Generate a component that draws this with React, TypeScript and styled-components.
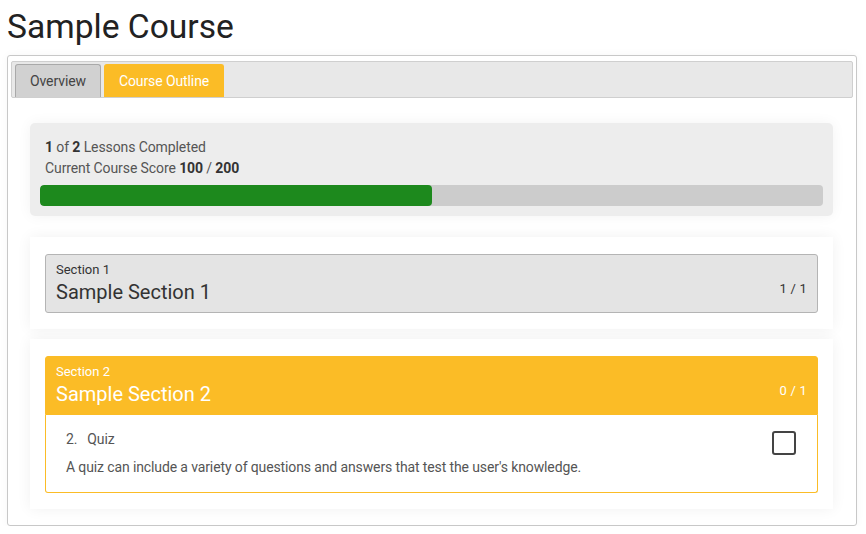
import styled, { createGlobalStyle } from 'styled-components';

const GlobalStyle = createGlobalStyle`
  body {
    margin: 0;
    background: #ffffff;
    font-family: Roboto, "Liberation Sans", Arial, sans-serif;
    color: #444;
  }
`;

const Yellow = '#fbbc26';

const Page = styled.div`
  padding: 8px 9px 0 7px;
`;

const Title = styled.h1`
  margin: 0 0 9px 0;
  font-size: 33.6px;
  line-height: 38px;
  font-weight: 400;
  color: #222;
`;

const Panel = styled.div`
  border: 1px solid #c8c8c8;
  border-radius: 3px;
  padding: 5px 3px 0;
  background: #fff;
  box-shadow: 0 0 8px rgba(0, 0, 0, 0.04);
`;

const TabBar = styled.div`
  display: flex;
  gap: 3px;
  align-items: flex-end;
  height: 33px;
  padding: 2px 3px 0;
  background: #e8e8e8;
  border: 1px solid #cfcfcf;
  border-radius: 2px;
`;

const Tab = styled.div<{ $active?: boolean }>`
  box-sizing: border-box;
  height: 33px;
  padding: 0 14px;
  display: flex;
  align-items: center;
  font-size: 14px;
  letter-spacing: -0.1px;
  border-radius: 3px 3px 0 0;
  color: ${(p) => (p.$active ? '#fff' : '#444')};
  background: ${(p) => (p.$active ? Yellow : '#d1d1d1')};
  border: 1px solid ${(p) => (p.$active ? Yellow : '#a9a9a9')};
  border-bottom: none;
`;

const Content = styled.div`
  display: flex;
  flex-direction: column;
  padding: 25px 20px 16px 19px;
`;

const ProgressBox = styled.div`
  background: #ededed;
  border-radius: 5px;
  padding: 14px 10px 10px;
  margin-bottom: 21px;
  box-shadow: 0 0 14px rgba(0, 0, 0, 0.05);
`;

const StatLine = styled.div`
  padding: 0 5px;
  font-size: 14px;
  line-height: 21px;
  color: #555;
  letter-spacing: -0.1px;

  b {
    color: #333;
    font-weight: 700;
  }
`;

const Track = styled.div`
  margin-top: 6px;
  height: 21px;
  border-radius: 4px;
  background: #cccccc;
  overflow: hidden;
`;

const Fill = styled.div`
  height: 100%;
  background: #1d891d;
  border-radius: 4px;
`;

const Card = styled.div`
  background: #fff;
  padding: 17px 15px 16px;
  margin-bottom: 10px;
  box-shadow: 0 0 14px rgba(0, 0, 0, 0.06);

  &:last-child {
    margin-bottom: 0;
  }
`;

const SectionHeader = styled.div<{ $open?: boolean }>`
  display: flex;
  justify-content: space-between;
  padding: 7px 10px 6px;
  border: 1px solid ${(p) => (p.$open ? Yellow : '#b4b4b4')};
  border-radius: ${(p) => (p.$open ? '3px 3px 0 0' : '3px')};
  background: ${(p) => (p.$open ? Yellow : '#e4e4e4')};
  color: ${(p) => (p.$open ? '#fff' : '#333')};
`;

const Label = styled.div`
  font-size: 13px;
  line-height: 16px;
`;

const SectionName = styled.div`
  font-size: 20px;
  line-height: 28px;
`;

const Count = styled.div`
  align-self: center;
  margin-top: 9px;
  font-size: 13px;
  letter-spacing: 0.2px;
`;

const SectionBody = styled.div`
  display: flex;
  justify-content: space-between;
  padding: 14px 21px 15px 20px;
  border: 1px solid ${Yellow};
  border-top: none;
  border-radius: 0 0 3px 3px;
`;

const Lesson = styled.div`
  font-size: 14px;
  line-height: 20px;
  color: #555;
  letter-spacing: -0.12px;
`;

const LessonTitle = styled.div`
  display: flex;
  gap: 10px;
  margin-bottom: 8px;
`;

const Checkbox = styled.div`
  box-sizing: border-box;
  width: 24px;
  height: 24px;
  margin-top: 2px;
  border: 2px solid #444;
  border-radius: 3px;
`;

export default function App() {
  const done = 1;
  const total = 2;
  return (
    <Page>
      <GlobalStyle />
      <Title>Sample Course</Title>
      <Panel>
        <TabBar>
          <Tab>Overview</Tab>
          <Tab $active>Course Outline</Tab>
        </TabBar>
        <Content>
          <ProgressBox>
            <StatLine>
              <b>1</b> of <b>2</b> Lessons Completed
            </StatLine>
            <StatLine>
              Current Course Score <b>100</b> / <b>200</b>
            </StatLine>
            <Track>
              <Fill style={{ width: `${(done / total) * 100}%` }} />
            </Track>
          </ProgressBox>
          <Card>
            <SectionHeader>
              <div>
                <Label>Section 1</Label>
                <SectionName>Sample Section 1</SectionName>
              </div>
              <Count>1 / 1</Count>
            </SectionHeader>
          </Card>
          <Card>
            <SectionHeader $open>
              <div>
                <Label>Section 2</Label>
                <SectionName>Sample Section 2</SectionName>
              </div>
              <Count>0 / 1</Count>
            </SectionHeader>
            <SectionBody>
              <Lesson>
                <LessonTitle>
                  <span>2.</span>
                  <span>Quiz</span>
                </LessonTitle>
                <div>A quiz can include a variety of questions and answers that test the user's knowledge.</div>
              </Lesson>
              <Checkbox />
            </SectionBody>
          </Card>
        </Content>
      </Panel>
    </Page>
  );
}
